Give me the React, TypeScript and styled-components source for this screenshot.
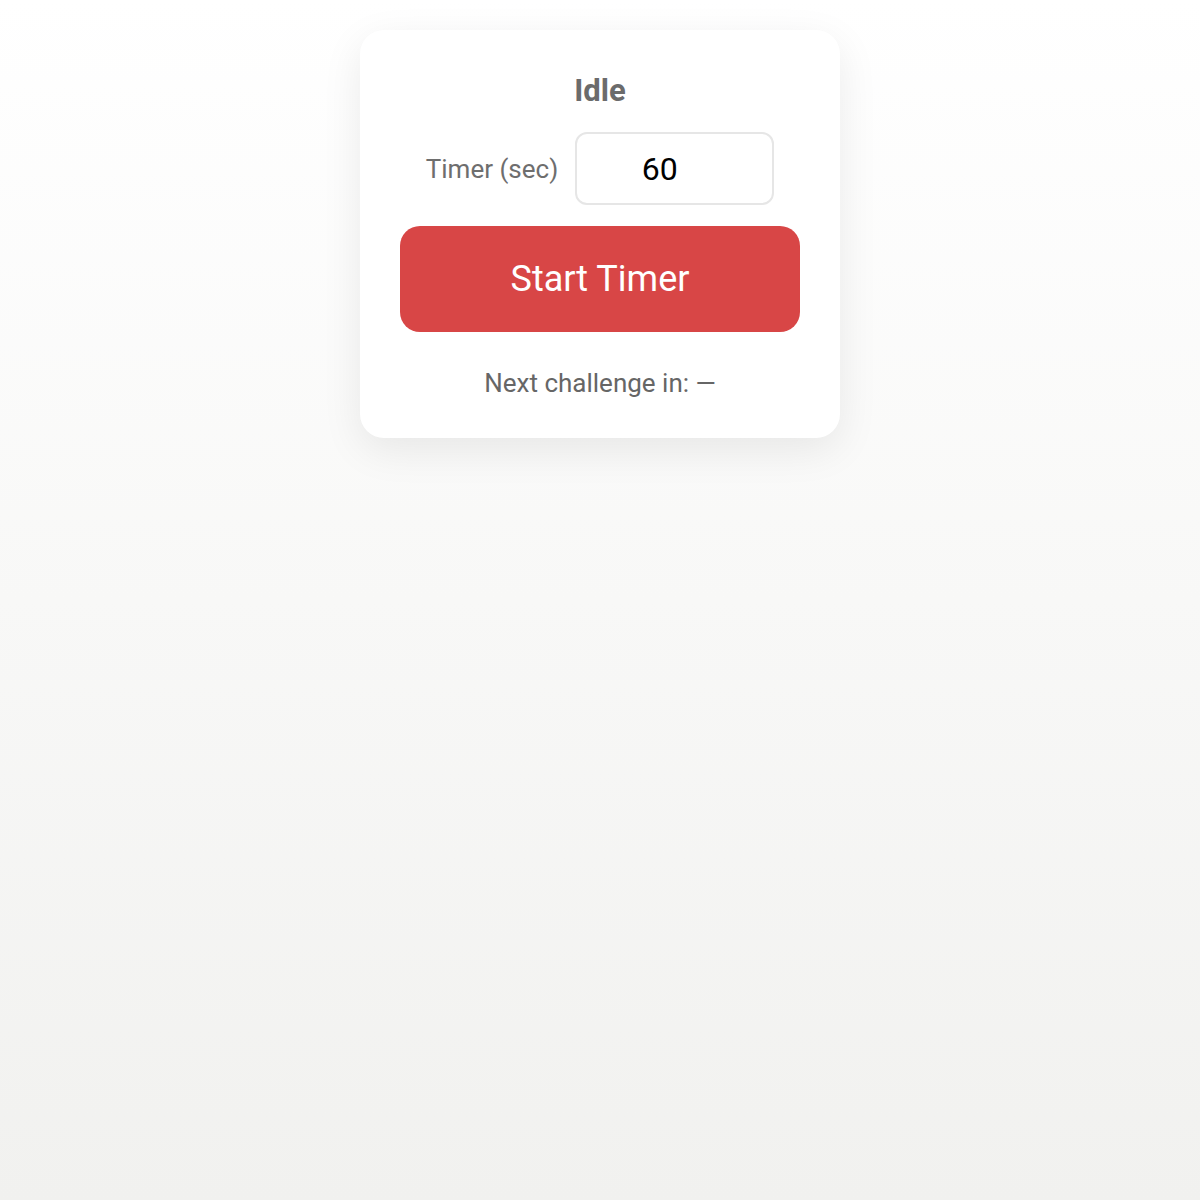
import React, { useState } from "react";
import styled, { createGlobalStyle } from "styled-components";

const GlobalStyle = createGlobalStyle`
  html, body { margin: 0; padding: 0; }
  body {
    min-height: 1200px;
    background: linear-gradient(180deg, #ffffff 0%, #f8f8f7 50%, #f1f1ef 100%);
    font-family: Roboto, "Liberation Sans", sans-serif;
  }
`;

const Page = styled.div`
  display: flex;
  justify-content: center;
  padding-top: 30px;
`;

const Card = styled.div`
  width: 480px;
  box-sizing: border-box;
  padding: 40px;
  background: #ffffff;
  border-radius: 24px;
  box-shadow: 0 12px 40px rgba(0, 0, 0, 0.08);
  display: flex;
  flex-direction: column;
  align-items: stretch;
`;

const Status = styled.div`
  font-size: 31px;
  line-height: 42px;
  font-weight: 700;
  color: #6b6b6b;
  text-align: center;
`;

const Row = styled.div`
  margin-top: 20px;
  display: flex;
  align-items: center;
  justify-content: center;
  gap: 17px;
`;

const Label = styled.label`
  font-size: 26px;
  color: #6e6e6e;
`;

const Input = styled.input`
  width: 199px;
  height: 73px;
  box-sizing: border-box;
  border: 2px solid #e6e6e6;
  border-radius: 12px;
  font-family: Roboto, "Liberation Sans", sans-serif;
  font-size: 32px;
  color: #000;
  text-align: center;
  padding: 0 30px 0 0;
  outline: none;
  -moz-appearance: textfield;
  &::-webkit-inner-spin-button,
  &::-webkit-outer-spin-button {
    -webkit-appearance: none;
    margin: 0;
  }
`;

const StartButton = styled.button`
  margin-top: 21px;
  height: 106px;
  border: none;
  border-radius: 20px;
  background: #d84646;
  color: #ffffff;
  font-family: Roboto, "Liberation Sans", sans-serif;
  font-size: 36px;
  cursor: pointer;
`;

const Next = styled.div`
  margin-top: 36px;
  font-size: 26px;
  line-height: 30px;
  color: #666666;
  text-align: center;
`;

export default function App() {
  const [secs, setSecs] = useState("60");
  return (
    <>
      <GlobalStyle />
      <Page>
        <Card>
          <Status>Idle</Status>
          <Row>
            <Label htmlFor="secs">Timer (sec)</Label>
            <Input
              id="secs"
              type="number"
              value={secs}
              onChange={(e) => setSecs(e.target.value)}
            />
          </Row>
          <StartButton>Start Timer</StartButton>
          <Next>Next challenge in: —</Next>
        </Card>
      </Page>
    </>
  );
}
